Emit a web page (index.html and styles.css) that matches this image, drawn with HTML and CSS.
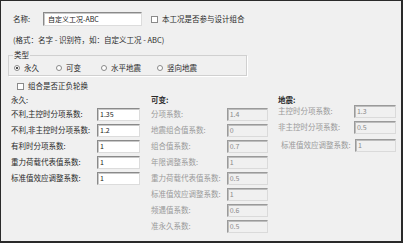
FILE: index.html
```html
<!DOCTYPE html>
<html>
<head>
<meta charset="utf-8">
<link rel="stylesheet" href="styles.css">
</head>
<body>
<div class="frame">
  <div class="name-row">
    <span class="name-label">名称:</span>
    <div class="input name-input">自定义工况-ABC</div>
    <span class="check"><span class="box"></span>本工况是否参与设计组合</span>
  </div>
  <div class="hint">(格式：名字 - 识别符，如：自定义工况 - ABC)</div>
  <fieldset class="group">
    <legend>类型</legend>
    <div class="radios">
      <span class="radio r1"><span class="dot checked"></span>永久</span>
      <span class="radio r2"><span class="dot"></span>可变</span>
      <span class="radio r3"><span class="dot"></span>水平地震</span>
      <span class="radio r4"><span class="dot"></span>竖向地震</span>
    </div>
  </fieldset>
  <div class="check combo"><span class="box"></span>组合是否正负轮换</div>
  <div class="cols">
    <div class="col left">
      <div class="head plain">永久:</div>
      <div class="row"><span class="lbl">不利,主控时分项系数:</span><div class="input">1.35</div></div>
      <div class="row"><span class="lbl">不利,非主控时分项系数:</span><div class="input">1.2</div></div>
      <div class="row"><span class="lbl">有利时分项系数:</span><div class="input">1</div></div>
      <div class="row"><span class="lbl">重力荷载代表值系数:</span><div class="input">1</div></div>
      <div class="row"><span class="lbl">标准值效应调整系数:</span><div class="input">1</div></div>
    </div>
    <div class="col mid">
      <div class="head">可变:</div>
      <div class="row"><span class="lbl off">分项系数:</span><div class="input dis">1.4</div></div>
      <div class="row"><span class="lbl off">地震组合值系数:</span><div class="input dis">0</div></div>
      <div class="row"><span class="lbl off">组合值系数:</span><div class="input dis">0.7</div></div>
      <div class="row"><span class="lbl off">年限调整系数:</span><div class="input dis">1</div></div>
      <div class="row"><span class="lbl off">重力荷载代表值系数:</span><div class="input dis">0.5</div></div>
      <div class="row"><span class="lbl off">标准值效应调整系数:</span><div class="input dis">1</div></div>
      <div class="row"><span class="lbl off">频遇值系数:</span><div class="input dis">0.6</div></div>
      <div class="row"><span class="lbl off">准永久系数:</span><div class="input dis">0.5</div></div>
    </div>
    <div class="col right">
      <div class="head">地震:</div>
      <div class="row"><span class="lbl off">主控时分项系数:</span><div class="input dis">1.3</div></div>
      <div class="row"><span class="lbl off">非主控时分项系数:</span><div class="input dis">0.5</div></div>
      <div class="row third"><span class="lbl off">标准值效应调整系数:</span><div class="input dis">1</div></div>
    </div>
  </div>
</div>
</body>
</html>
```

FILE: styles.css
```css
html, body {
  margin: 0;
  padding: 0;
  background: #f0f0f0;
}
body {
  font-family: "Noto Sans CJK SC", "Noto Sans", sans-serif;
  font-size: 7.5px;
  line-height: 10px;
  color: #2a2a2a;
}
.frame {
  width: 403px;
  height: 243px;
  box-sizing: border-box;
  border-style: solid;
  border-color: #2a2a2a;
  border-width: 1px 2px 2px 1px;
  background: #f0f0f0;
  overflow: hidden;
}
.input {
  box-sizing: border-box;
  height: 13px;
  background: #fff;
  border: 1px solid;
  border-color: #8a8a8a #dcdcdc #dcdcdc #8a8a8a;
  box-shadow: inset 1px 1px 0 #c8c8c8;
  padding: 0 2px;
  line-height: 11px;
  font-size: 7px;
  color: #222;
}
.input.dis {
  background: #f0f0f0;
  color: #8a8a8a;
  border-color: #9a9a9a #dadada #dadada #9a9a9a;
  box-shadow: inset 1px 1px 0 #bdbdbd;
}
.name-row {
  display: flex;
  align-items: center;
  margin-top: 11px;
  padding-left: 12px;
  height: 14px;
}
.name-label {
  width: 30px;
}
.name-input {
  width: 99px;
  height: 14px;
  line-height: 12px;
  padding-left: 4px;
}
.check {
  display: flex;
  align-items: center;
}
.name-row .check {
  margin-left: 9px;
}
.box {
  width: 7px;
  height: 7px;
  box-sizing: border-box;
  border: 1px solid #8a8a8a;
  background: #fff;
  margin-right: 4px;
}
.hint {
  margin-top: 9px;
  padding-left: 12px;
  height: 10px;
}
.group {
  margin: 6px 0 0 7px;
  width: 239px;
  height: 25px;
  box-sizing: border-box;
  border: 1px solid #d0d0d0;
  box-shadow: 1px 1px 0 #fff;
  padding: 0;
}
.group legend {
  padding: 0 1px;
  margin-left: 4px;
  line-height: 8px;
  height: 8px;
}
.radios {
  display: flex;
  align-items: center;
  height: 11px;
  margin-top: 3px;
  padding-left: 5px;
}
.radio {
  display: flex;
  align-items: center;
}
.dot {
  width: 6px;
  height: 6px;
  border-radius: 50%;
  border: 1px solid #8a8a8a;
  background: #fff;
  box-sizing: border-box;
  margin-right: 4px;
  position: relative;
}
.dot.checked::after {
  content: "";
  position: absolute;
  left: 1px;
  top: 1px;
  width: 2px;
  height: 2px;
  border-radius: 50%;
  background: #111;
}
.r2 { margin-left: 17px; }
.r3 { margin-left: 20px; }
.r4 { margin-left: 16px; }
.combo {
  margin-top: 5px;
  padding-left: 16px;
  height: 10px;
}
.cols {
  display: grid;
  grid-template-columns: 140px 127px 128px;
  margin-top: 4px;
}
.col {
  display: flex;
  flex-direction: column;
}
.left { padding-left: 10px; }
.mid { padding-left: 10px; }
.right { padding-left: 10px; }
.head {
  height: 10px;
  font-weight: bold;
  margin-bottom: 1px;
}
.head.plain { font-weight: normal; }
.right .head { margin-bottom: -2px; }
.row {
  display: flex;
  align-items: center;
  height: 16px;
}
.lbl {
  white-space: nowrap;
}
.lbl.off { color: #9a9a9a; }
.left .lbl { width: 86px; }
.left .input { width: 43px; }
.mid .lbl { width: 77px; }
.mid .input { width: 42px; }
.right .lbl { width: 78px; }
.right .input { width: 43px; }
.right .third { margin-top: 2px; padding-left: 3px; }
.right .third .lbl { width: 76px; }
.right .third .input { width: 42px; }
```
